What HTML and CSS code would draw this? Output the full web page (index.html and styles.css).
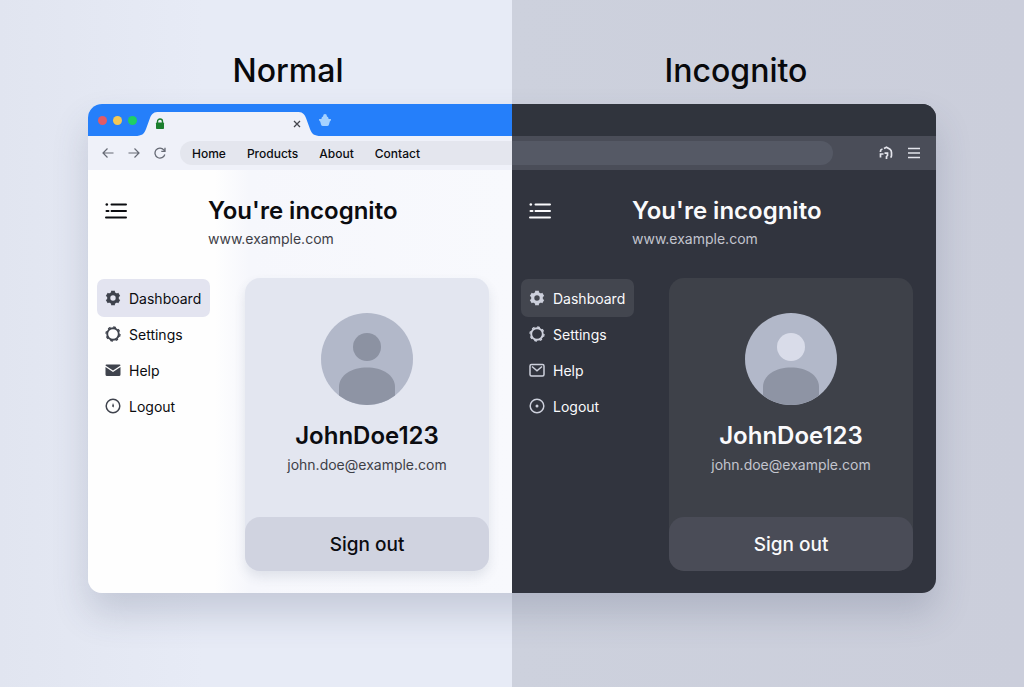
FILE: index.html
```html
<!DOCTYPE html>
<html lang="en">
<head>
    <meta charset="UTF-8">
    <meta name="viewport" content="width=device-width, initial-scale=1.0">
    <title>Normal vs Incognito</title>
    <link rel="stylesheet" href="styles.css">
</head>
<body>
    <svg class="sprite" aria-hidden="true">
        <symbol id="list" viewBox="0 0 22 18">
            <path d="M6.5 2.5H21M6.5 9H21M1 15.500H21" stroke="currentColor" stroke-width="2" stroke-linecap="round"/>
            <circle cx="1.800" cy="2.500" r="1.300" fill="currentColor"/>
            <path d="M1.500 9H3.500" stroke="currentColor" stroke-width="2" stroke-linecap="round"/>
        </symbol>
        <symbol id="gear" viewBox="0 0 16 16">
            <circle cx="8" cy="8" r="4.300" fill="none" stroke="currentColor" stroke-width="3.200"/>
            <path d="M8 .8V4M8 12V15.200M1.760 4.400L4.500 6M11.500 10L14.240 11.600M1.760 11.600L4.500 10M11.500 6L14.240 4.400" stroke="currentColor" stroke-width="3.800"/>
        </symbol>
        <symbol id="cog" viewBox="0 0 16 16">
            <circle cx="8" cy="8" r="5.800" fill="none" stroke="currentColor" stroke-width="1.900"/>
            <circle cx="8" cy="8" r="7" fill="none" stroke="currentColor" stroke-width="1.300" stroke-dasharray="2.700 2.800"/>
        </symbol>
        <symbol id="mail-solid" viewBox="0 0 16 16">
            <path d="M.5 3.500Q.5 2.500 1.500 2.500H14.500Q15.500 2.500 15.500 3.500L8 8.600Z" fill="currentColor"/>
            <path d="M.5 5L8 10L15.500 5V12.500Q15.500 14 14 14H2Q.5 14 .5 12.500Z" fill="currentColor"/>
        </symbol>
        <symbol id="mail" viewBox="0 0 16 16">
            <rect x="1" y="2.500" width="14" height="11.500" rx="1.500" fill="none" stroke="currentColor" stroke-width="1.500"/>
            <path d="M3 4.500L8 8.800L13 4.500" fill="none" stroke="currentColor" stroke-width="1.500"/>
        </symbol>
        <symbol id="clock" viewBox="0 0 16 16">
            <circle cx="8" cy="8" r="6.800" fill="none" stroke="currentColor" stroke-width="1.500"/>
            <path d="M8 5L9 7.500L8.600 9.500L7 8.200Z" fill="currentColor"/>
        </symbol>
        <symbol id="target" viewBox="0 0 16 16">
            <circle cx="8" cy="8" r="6.800" fill="none" stroke="currentColor" stroke-width="1.500"/>
            <circle cx="8" cy="8" r="1.500" fill="currentColor"/>
        </symbol>
    </svg>

    <div class="titles">
        <h1>Normal</h1>
        <h1>Incognito</h1>
    </div>

    <div class="browser">
        <section class="half light">
            <div class="titlebar">
                <span class="dot red"></span>
                <span class="dot yellow"></span>
                <span class="dot green"></span>
                <div class="tab">
                    <svg class="tab-shape" viewBox="0 0 186 24" aria-hidden="true">
                        <path d="M0 24C7 24 9 22 11 17L15 6C17 1 19 0 24 0H162C167 0 169 1 171 6L175 17C177 22 179 24 186 24Z"/>
                    </svg>
                    <svg class="lock" viewBox="0 0 10 12" aria-hidden="true">
                        <path d="M2.500 5V3.500A2.500 2.500 0 0 1 7.500 3.500V5" fill="none" stroke="#1c7f2e" stroke-width="1.400"/>
                        <rect x="1" y="4.500" width="8" height="6.500" rx=".8" fill="#1c7f2e"/>
                    </svg>
                    <button class="close" aria-label="Close tab">
                        <svg viewBox="0 0 8 8"><path d="M1 1L7 7M7 1L1 7" stroke="currentColor" stroke-width="1.300"/></svg>
                    </button>
                </div>
                <button class="new-tab" aria-label="New tab">
                    <svg viewBox="0 0 12 14"><path d="M2.500 6V5.200Q2.500 3.800 4 3.400Q4.200 1 6 1T8 3.400Q9.500 3.800 9.500 5.200V6H12Q12 8 10.800 8.500L10 11.500Q9.600 13 8 13H4Q2.400 13 2 11.500L1.200 8.500Q0 8 0 6Z" fill="#a6d2ff"/></svg>
                </button>
            </div>
            <div class="toolbar">
                <button class="tool" aria-label="Back">
                    <svg viewBox="0 0 12 12"><path d="M11.500 6H1M5.500 1.500L1 6L5.500 10.500" fill="none" stroke="currentColor" stroke-width="1.200"/></svg>
                </button>
                <button class="tool" aria-label="Forward">
                    <svg viewBox="0 0 12 12"><path d="M.5 6H11M6.500 1.500L11 6L6.500 10.500" fill="none" stroke="currentColor" stroke-width="1.200"/></svg>
                </button>
                <button class="tool" aria-label="Reload">
                    <svg viewBox="0 0 12 12"><path d="M10.800 7.500A5 5 0 1 1 9.800 2.800L11 4.200M11 .8V4.400H7.300" fill="none" stroke="currentColor" stroke-width="1.300"/></svg>
                </button>
                <nav class="address">
                    <a href="#">Home</a>
                    <a href="#">Products</a>
                    <a href="#">About</a>
                    <a href="#">Contact</a>
                </nav>
            </div>
            <div class="page">
                <header class="page-head">
                    <button class="menu-btn" aria-label="Menu"><svg><use href="#list"/></svg></button>
                    <div>
                        <h2>You're incognito</h2>
                        <p>www.example.com</p>
                    </div>
                </header>
                <div class="columns">
                    <ul class="menu">
                        <li><a class="active" href="#"><svg><use href="#gear"/></svg>Dashboard</a></li>
                        <li><a href="#"><svg><use href="#cog"/></svg>Settings</a></li>
                        <li><a href="#"><svg><use href="#mail-solid"/></svg>Help</a></li>
                        <li><a href="#"><svg><use href="#clock"/></svg>Logout</a></li>
                    </ul>
                    <div class="card">
                        <svg class="avatar" viewBox="0 0 92 92" aria-hidden="true">
                            <circle class="ring" cx="46" cy="46" r="46"/>
                            <circle class="head" cx="46" cy="34" r="14"/>
                            <path class="torso" d="M18 82.500V74C18 62 31 54.500 46 54.500S74 62 74 74V82.500A46 46 0 0 1 18 82.500Z"/>
                        </svg>
                        <h3>JohnDoe123</h3>
                        <p>john.doe@example.com</p>
                        <button class="signout">Sign out</button>
                    </div>
                </div>
            </div>
        </section>

        <section class="half dark">
            <div class="titlebar"></div>
            <div class="toolbar">
                <div class="address"></div>
                <button class="tool" aria-label="Incognito">
                    <svg viewBox="0 0 14 14"><path d="M1.500 6V5Q1.500 3.500 3.500 3M5 2.500L7.500 1.200L11 3.200Q12.500 4.200 12.500 6.500V9.500Q12.500 11 11.500 11.500M1.500 11.500V8H4.500M5.500 7.200H8.500V9.500L7.500 10.500V13" fill="none" stroke="currentColor" stroke-width="1.700"/></svg>
                </button>
                <button class="tool" aria-label="Browser menu">
                    <svg viewBox="0 0 14 14"><path d="M1 2.500H13M1 7H13M1 11.500H13" stroke="currentColor" stroke-width="1.500"/></svg>
                </button>
            </div>
            <div class="page">
                <header class="page-head">
                    <button class="menu-btn" aria-label="Menu"><svg><use href="#list"/></svg></button>
                    <div>
                        <h2>You're incognito</h2>
                        <p>www.example.com</p>
                    </div>
                </header>
                <div class="columns">
                    <ul class="menu">
                        <li><a class="active" href="#"><svg><use href="#gear"/></svg>Dashboard</a></li>
                        <li><a href="#"><svg><use href="#cog"/></svg>Settings</a></li>
                        <li><a href="#"><svg><use href="#mail"/></svg>Help</a></li>
                        <li><a href="#"><svg><use href="#target"/></svg>Logout</a></li>
                    </ul>
                    <div class="card">
                        <svg class="avatar" viewBox="0 0 92 92" aria-hidden="true">
                            <circle class="ring" cx="46" cy="46" r="46"/>
                            <circle class="head" cx="46" cy="34" r="14"/>
                            <path class="torso" d="M18 82.500V74C18 62 31 54.500 46 54.500S74 62 74 74V82.500A46 46 0 0 1 18 82.500Z"/>
                        </svg>
                        <h3>JohnDoe123</h3>
                        <p>john.doe@example.com</p>
                        <button class="signout">Sign out</button>
                    </div>
                </div>
            </div>
        </section>
    </div>
</body>
</html>
```
FILE: styles.css
```css
* {
    box-sizing: border-box;
}

body {
    margin: 0;
    min-height: 100vh;
    font-family: Inter, "Liberation Sans", sans-serif;
    background: linear-gradient(to right, #e1e5f0 0, #e7ebf6 20%, #e7ebf6 50%, #cdd1dd 50%, #cbcedb 100%);
}

h1, h2, h3, p, ul {
    margin: 0;
    padding: 0;
}

ul {
    list-style: none;
}

a {
    color: inherit;
    text-decoration: none;
}

button {
    border: none;
    padding: 0;
    background: none;
    color: inherit;
    font-family: inherit;
    cursor: pointer;
}

svg {
    display: block;
}

.sprite {
    position: absolute;
    width: 0;
    height: 0;
}

.titles {
    display: grid;
    grid-template-columns: 1fr 1fr;
    padding: 51px 64px 13px;
    text-align: center;
}

.titles h1 {
    font-size: 32px;
    line-height: 40px;
    font-weight: 500;
    color: #08090c;
}

/* browser window */
.browser {
    display: grid;
    grid-template-columns: 1fr 1fr;
    margin: 0 88px;
    border-radius: 14px;
    overflow: hidden;
    box-shadow: 0 20px 36px rgba(60, 70, 100, 0.2);
}

.light {
    --bar: #257ffa;
    --toolbar: #eff1f9;
    --address: #e4e6ee;
    --page: linear-gradient(to right, #fefefe 30%, #f6f7fc 38%, #f8f9fd 100%);
    --text: #0b0c10;
    --muted: #3e4047;
    --icon: #3f434d;
    --active: #e3e4f0;
    --card: #e3e6f0;
    --button: #d0d3e0;
    --head: #8c92a2;
    --shadow: 0 6px 12px rgba(60, 70, 100, 0.12);
}

.dark {
    --bar: #30343d;
    --toolbar: #4a4d58;
    --address: #555965;
    --page: #31343e;
    --text: #fafafc;
    --muted: #c3c5ce;
    --icon: #cdd0dc;
    --active: #43464f;
    --card: #3e4149;
    --button: #4a4c57;
    --head: #d9dce9;
    --shadow: none;
}

.half {
    color: var(--text);
    background: var(--page);
}

.titlebar {
    display: flex;
    align-items: center;
    gap: 6px;
    height: 32px;
    padding-left: 10px;
    background: var(--bar);
}

.dot {
    width: 9px;
    height: 9px;
    border-radius: 50%;
}

.red {
    background: #e35b66;
}

.yellow {
    background: #f3c855;
}

.green {
    background: #1fcf63;
}

.tab {
    position: relative;
    align-self: flex-end;
    display: flex;
    align-items: center;
    justify-content: space-between;
    width: 186px;
    height: 24px;
    margin-left: -8px;
    padding: 0 20px;
}

.tab-shape {
    position: absolute;
    inset: 0;
    fill: var(--toolbar);
}

.lock {
    position: relative;
    width: 10px;
    height: 12px;
}

.close {
    position: relative;
    color: #44464e;
}

.close svg {
    width: 8px;
    height: 8px;
}

.new-tab {
    margin-left: -8px;
}

.new-tab svg {
    width: 12px;
    height: 14px;
}

.toolbar {
    display: flex;
    align-items: center;
    height: 34px;
    background: var(--toolbar);
}

.light .toolbar {
    gap: 14px;
    padding-left: 14px;
    color: #666a75;
}

.dark .toolbar {
    gap: 14px;
    padding-right: 15px;
    color: #e4e5ec;
}

.tool svg {
    width: 12px;
    height: 12px;
}

.dark .tool svg {
    width: 14px;
    height: 14px;
}

.address {
    display: flex;
    align-items: center;
    flex: 1;
    gap: 21px;
    height: 24px;
    background: var(--address);
    font-size: 12px;
    font-weight: 500;
    color: var(--text);
}

.light .address {
    padding-left: 12px;
    border-radius: 12px 0 0 12px;
}

.dark .address {
    margin-right: 32px;
    border-radius: 0 12px 12px 0;
}

/* page content */
.page {
    padding: 26px 23px 22px 9px;
}

.page-head {
    display: flex;
    align-items: flex-start;
    gap: 81px;
    padding-left: 8px;
    margin-bottom: 29px;
}

.menu-btn svg {
    width: 22px;
    height: 18px;
    margin-top: 6px;
}

.page-head h2 {
    font-size: 24px;
    line-height: 30px;
    font-weight: 600;
}

.page-head p {
    margin-top: 3px;
}

.page-head p,
.card p {
    font-size: 14px;
    line-height: 20px;
    color: var(--muted);
}

.columns {
    display: flex;
    gap: 35px;
}

.menu {
    flex: none;
    width: 113px;
    padding-top: 1px;
}

.menu a {
    display: flex;
    align-items: center;
    gap: 8px;
    height: 38px;
    padding-left: 8px;
    border-radius: 7px;
    font-size: 14px;
}

.menu li + li {
    margin-top: -2px;
}

.menu svg {
    width: 16px;
    height: 16px;
    color: var(--icon);
}

.menu .active {
    background: var(--active);
}

.card {
    flex: 1;
    padding-top: 35px;
    border-radius: 15px;
    background: var(--card);
    box-shadow: var(--shadow);
    text-align: center;
}

.avatar {
    width: 92px;
    height: 92px;
    margin: 0 auto 16px;
}

.ring {
    fill: #b2b8c9;
}

.head {
    fill: var(--head);
}

.torso {
    fill: #8e94a4;
}

.card h3 {
    margin-bottom: 4px;
    font-size: 24px;
    line-height: 30px;
    font-weight: 600;
}

.signout {
    width: 100%;
    height: 54px;
    margin-top: 42px;
    border-radius: 15px;
    background: var(--button);
    font-size: 19px;
    font-weight: 500;
}
```
